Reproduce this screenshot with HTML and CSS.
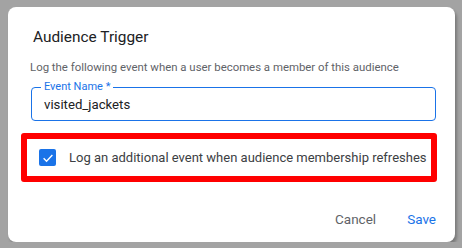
FILE: index.html
```html
<!DOCTYPE html>
<html lang="en">
<head>
  <meta charset="UTF-8">
  <meta name="viewport" content="width=device-width, initial-scale=1.0">
  <title>Audience Trigger</title>
  <link rel="stylesheet" href="styles.css">
</head>
<body>
  <div class="dialog">
    <h2 class="dialog-title">Audience Trigger</h2>
    <p class="dialog-text">Log the following event when a user becomes a member of this audience</p>

    <div class="field">
      <label class="field-label" for="eventName">Event Name *</label>
      <input class="field-input" id="eventName" type="text" value="visited_jackets">
    </div>

    <div class="highlight">
      <label class="check-row">
        <span class="checkbox">
          <svg viewBox="0 0 24 24" width="14" height="14">
            <path d="M4.5 12.5l5 5L19.5 7" fill="none" stroke="#fff" stroke-width="2.4"/>
          </svg>
        </span>
        <span class="check-label">Log an additional event when audience membership refreshes</span>
      </label>
    </div>

    <div class="dialog-actions">
      <button class="btn btn-cancel">Cancel</button>
      <button class="btn btn-save">Save</button>
    </div>
  </div>
</body>
</html>
```

FILE: styles.css
```css
:root {
  --primary-color: #1a73e8;
  --text-color: #202124;
  --muted-text: #5f6368;
  --backdrop: #a3a3a3;
}

* {
  box-sizing: border-box;
  margin: 0;
  padding: 0;
}

body {
  font-family: Roboto, "Liberation Sans", sans-serif;
  background: var(--backdrop);
  padding: 7px 0 0 8px;
  color: var(--text-color);
}

.dialog {
  width: 447px;
  height: 235px;
  background: #ffffff;
  border-radius: 8px;
  box-shadow: 2px 3px 3px rgba(0, 0, 0, 0.25);
  padding: 20px 19px 0 22px;
  display: flex;
  flex-direction: column;
}

.dialog-title {
  font-size: 15.4px;
  font-weight: 400;
  line-height: 20px;
  padding-left: 3px;
  color: var(--text-color);
}

.dialog-text {
  margin-top: 12px;
  font-size: 11.4px;
  line-height: 16px;
  color: var(--muted-text);
}

.field {
  position: relative;
  margin-top: 12px;
  margin-left: 1px;
}

.field-input {
  width: 100%;
  height: 34px;
  border: 1px solid var(--primary-color);
  border-radius: 4px;
  padding: 0 12px;
  font-family: inherit;
  font-size: 13.2px;
  color: var(--text-color);
  outline: none;
}

.field-label {
  position: absolute;
  left: 10px;
  top: -7px;
  padding: 0 3px;
  background: #ffffff;
  font-size: 11px;
  line-height: 13px;
  color: var(--primary-color);
}

.highlight {
  margin: 12px -1px 0 -9px;
  border: 6px solid #ff0000;
  border-radius: 3px;
  height: 49px;
}

.check-row {
  display: flex;
  align-items: center;
  height: 100%;
  padding-left: 12px;
  gap: 13px;
}

.checkbox {
  flex-shrink: 0;
  width: 17px;
  height: 17px;
  border-radius: 2px;
  background: var(--primary-color);
  display: inline-flex;
  align-items: center;
  justify-content: center;
}

.check-label {
  font-size: 13px;
  white-space: nowrap;
  color: #3c4043;
}

.dialog-actions {
  margin-top: auto;
  margin-right: -8px;
  margin-bottom: 5px;
  display: flex;
  justify-content: flex-end;
  gap: 15px;
}

.btn {
  background: none;
  border: none;
  font-family: inherit;
  font-size: 13.5px;
  line-height: 36px;
  padding: 0 8px;
  cursor: pointer;
}

.btn-cancel {
  color: var(--muted-text);
}

.btn-save {
  color: var(--primary-color);
}
```
